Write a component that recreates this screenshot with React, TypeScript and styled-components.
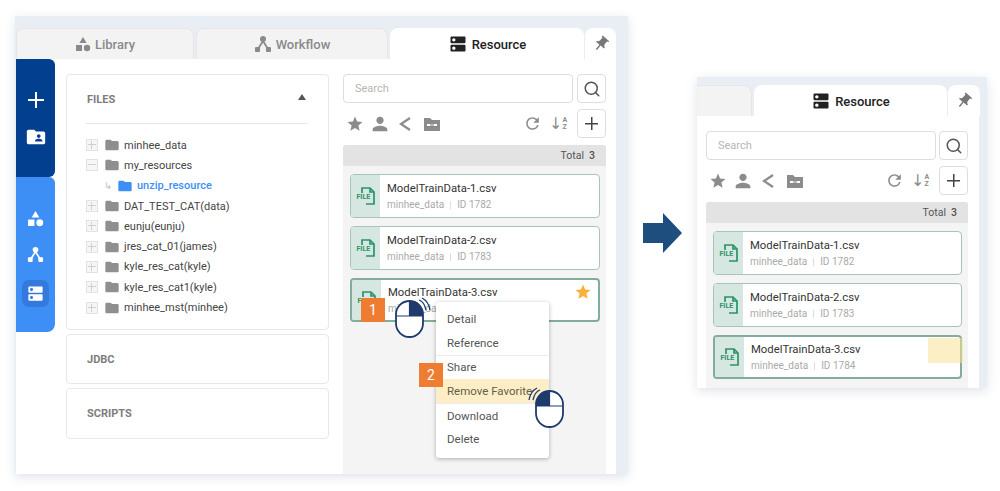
import styled, { createGlobalStyle } from 'styled-components';
import { MdDns, MdFolder, MdFolderShared, MdPerson, MdPushPin, MdRefresh, MdStar } from 'react-icons/md';
import { Search } from 'lucide-react';

const GlobalStyle = createGlobalStyle`
  html, body { margin: 0; padding: 0; background: #fff; }
  body { font-family: Roboto, "Liberation Sans", sans-serif; overflow: hidden; }
`;

const folders = [
  { name: 'minhee_data' },
  { name: 'my_resources', open: true },
  { name: 'unzip_resource', child: true },
  { name: 'DAT_TEST_CAT(data)' },
  { name: 'eunju(eunju)' },
  { name: 'jres_cat_01(james)' },
  { name: 'kyle_res_cat(kyle)' },
  { name: 'kyle_res_cat1(kyle)' },
  { name: 'minhee_mst(minhee)' },
];

function ShapesIcon({ size = 16 }: { size?: number }) {
  return (
    <svg width={size} height={size} viewBox="0 0 16 16" fill="currentColor">
      <path d="M8 1l3.600 6H4.400z" />
      <rect x="1" y="9" width="6" height="6" />
      <circle cx="12" cy="12" r="3.200" />
    </svg>
  );
}

function TreeIcon({ size = 18 }: { size?: number }) {
  return (
    <svg width={size} height={size} viewBox="0 0 18 18" fill="currentColor">
      <circle cx="9" cy="4" r="3" />
      <rect x="1" y="12" width="5" height="5" rx="1" />
      <rect x="12" y="12" width="5" height="5" rx="1" />
      <path d="M9 6L4 14M9 6l5 8" stroke="currentColor" strokeWidth="1.800" fill="none" />
    </svg>
  );
}

function ShareIcon() {
  return (
    <ShareSvg width="14" height="16" viewBox="0 0 14 16" fill="none" stroke="#8c8c8c" strokeWidth="2.200">
      <path d="M12 2L3 8l9 6" />
    </ShareSvg>
  );
}

function DotFolderIcon() {
  return (
    <svg width="16" height="14" viewBox="0 0 16 14">
      <path d="M0 1h6l2 2h8v11H0z" fill="#8c8c8c" />
      <rect x="3" y="7" width="3" height="2" fill="#fff" />
      <rect x="10" y="7" width="3" height="2" fill="#fff" />
      <rect x="6" y="7.600" width="4" height="0.800" fill="#fff" />
    </svg>
  );
}

function FileBadgeIcon() {
  return (
    <FileIconWrap>
      <svg width="16" height="18" viewBox="0 0 16 18" fill="none" stroke="#2b9368" strokeWidth="1.700">
        <path d="M2 6V1h8l4 4v12H6" />
        <path d="M10 1v4h4" />
      </svg>
      <FileLabel>FILE</FileLabel>
    </FileIconWrap>
  );
}

function MouseIcon({ left, top, flip }: { left: number; top: number; flip?: boolean }) {
  return (
    <MouseWrap $left={left} $top={top} $flip={flip}>
      <svg width="40" height="42" viewBox="0 0 40 42" fill="none">
        <rect x="1" y="5" width="27" height="36" rx="13.500" fill="#fff" stroke="#1f3b6d" strokeWidth="1.800" />
        <path d="M14.500 5h0A13.500 13.500 0 0 1 28 18.500V20H14.500z" fill="#1f3b6d" />
        <path d="M1 20h27M14.500 5v15" stroke="#1f3b6d" strokeWidth="1.200" />
        <path d="M24 4c3 1 6 5 7 10M27 2c4 2 7 6 8 12" stroke="#1f3b6d" strokeWidth="1.300" />
      </svg>
    </MouseWrap>
  );
}

function ResourcePanel({ active, showMenu }: { active?: boolean; showMenu?: boolean }) {
  const files = [
    { name: 'ModelTrainData-1.csv', id: 1782 },
    { name: 'ModelTrainData-2.csv', id: 1783 },
    { name: 'ModelTrainData-3.csv', id: 1784, last: true },
  ];

  return (
    <Panel>
      <SearchRow>
        <SearchBox>Search</SearchBox>
        <SquareButton><Search size={18} color="#555" strokeWidth={2} /></SquareButton>
      </SearchRow>
      <ToolRow>
        <ToolIcons>
          <MdStar size={18} color="#8c8c8c" />
          <MdPerson size={22} color="#8c8c8c" />
          <ShareIcon />
          <DotFolderIcon />
        </ToolIcons>
        <ToolRight>
          <MdRefresh size={19} color="#8c8c8c" />
          <SortIcon>
            <SortArrow>↓</SortArrow>
            <SortLetters><span>A</span><span>Z</span></SortLetters>
          </SortIcon>
          <SquareButton><PlusGlyph $color="#444" $size={13} $weight={1.5} /></SquareButton>
        </ToolRight>
      </ToolRow>
      <ListArea>
        <TotalBar>Total<b>3</b></TotalBar>
        <CardList>
          {files.map((f) => (
            <Card key={f.id} $strong={f.last}>
              <CardStrip><FileBadgeIcon /></CardStrip>
              <CardText $strong={f.last}>
                <CardTitle>{f.name}</CardTitle>
                <CardMeta>minhee_data<i />ID {f.id}</CardMeta>
              </CardText>
              {f.last && showMenu && <CardStar><MdStar size={18} color="#fbb03b" /></CardStar>}
              {f.last && active && <Highlight />}
            </Card>
          ))}
        </CardList>
        {showMenu && (
          <>
            <ContextMenu>
              <MenuItem>Detail</MenuItem>
              <MenuItem>Reference</MenuItem>
              <MenuRule />
              <MenuItem>Share</MenuItem>
              <MenuItem $on>Remove Favorite</MenuItem>
              <MenuRule />
              <MenuItem>Download</MenuItem>
              <MenuItem>Delete</MenuItem>
            </ContextMenu>
            <StepBadge $left={18} $top={153}>1</StepBadge>
            <StepBadge $left={76} $top={218}>2</StepBadge>
            <MouseIcon left={52} top={151} />
            <MouseIcon left={181} top={241} flip />
          </>
        )}
      </ListArea>
    </Panel>
  );
}

export default function App() {
  return (
    <>
      <GlobalStyle />
      <Page>
        <MainWindow>
          <TabBar>
            <Tab $width={178}><ShapesIcon />Library</Tab>
            <Tab $width={192}><TreeIcon />Workflow</Tab>
            <Tab $width={194} $active><MdDns size={20} />Resource</Tab>
            <PinTab $width={31}><MdPushPin size={18} /></PinTab>
          </TabBar>
          <MainBody>
            <Sidebar>
              <SideTop>
                <PlusGlyph $color="#fff" $size={16} $weight={2} />
                <MdFolderShared size={22} color="#fff" />
              </SideTop>
              <SideBottom>
                <ShapesIcon size={17} />
                <TreeIcon size={17} />
                <SideSelected><MdDns size={19} color="#fff" /></SideSelected>
              </SideBottom>
            </Sidebar>
            <FilesColumn>
              <FilesBox>
                <FilesHead>
                  <BoxTitle>FILES</BoxTitle>
                  <Caret />
                </FilesHead>
                <TreeList>
                  {folders.map((f) => (
                    <TreeRow key={f.name}>
                      {f.child ? (
                        <ChildHook>↳</ChildHook>
                      ) : (
                        <Toggle $open={f.open} />
                      )}
                      <MdFolder size={16} color={f.child ? '#3d8ff5' : '#8f8f8f'} />
                      <TreeName $child={f.child}>{f.name}</TreeName>
                    </TreeRow>
                  ))}
                </TreeList>
              </FilesBox>
              <CollapsedBox $height={50}><BoxTitle>JDBC</BoxTitle></CollapsedBox>
              <CollapsedBox $height={51}><BoxTitle>SCRIPTS</BoxTitle></CollapsedBox>
            </FilesColumn>
            <ResourcePanel showMenu />
          </MainBody>
        </MainWindow>
        <ArrowWrap>
          <svg width="39" height="40" viewBox="0 0 39 40">
            <path d="M0 10h20V0l19 20-19 20V30H0z" fill="#1d4e7e" />
          </svg>
        </ArrowWrap>
        <SideWindow>
          <TabBar>
            <Tab $width={55} $flush />
            <Tab $width={193} $active><MdDns size={20} />Resource</Tab>
            <PinTab $width={32}><MdPushPin size={18} /></PinTab>
          </TabBar>
          <SideBody>
            <ResourcePanel active />
          </SideBody>
        </SideWindow>
      </Page>
    </>
  );
}

const Page = styled.div`
  display: flex;
  align-items: flex-start;
  width: 1000px;
  height: 491px;
  padding: 16px 0 0 15px;
  box-sizing: border-box;
`;

const MainWindow = styled.div`
  flex: none;
  width: 613px;
  height: 458px;
  padding: 12px 12px 0 1px;
  box-sizing: border-box;
  display: flex;
  flex-direction: column;
  background: #e9edf4;
  box-shadow: 0 3px 10px rgba(60, 80, 120, 0.16);
`;

const SideWindow = styled(MainWindow)`
  width: 290px;
  height: 311px;
  margin: 61px 0 0 15px;
  padding: 8px 8px 0 0;
`;

const TabBar = styled.div`
  flex: none;
  display: flex;
  gap: 2px;
  height: 31px;
`;

const Tab = styled.div<{ $width: number; $active?: boolean; $flush?: boolean }>`
  flex: none;
  width: ${(p) => p.$width}px;
  display: flex;
  align-items: center;
  justify-content: center;
  gap: 4px;
  box-sizing: border-box;
  border: 1px solid ${(p) => (p.$active ? '#fff' : '#e6e6e6')};
  border-bottom: 0;
  border-left-width: ${(p) => (p.$flush ? 0 : '1px')};
  border-radius: ${(p) => (p.$flush ? '0 8px 0 0' : '8px 8px 0 0')};
  background: ${(p) => (p.$active ? '#fff' : '#f3f3f3')};
  color: ${(p) => (p.$active ? '#222' : '#8a8a8a')};
  font-size: 13px;
  font-weight: 500;
`;

const PinTab = styled(Tab)`
  margin-left: -1px;
  background: #fff;
  border-color: #fff;
  color: #777;
  svg { transform: rotate(40deg); }
`;

const MainBody = styled.div`
  flex: 1;
  min-height: 0;
  display: flex;
  align-items: stretch;
  padding-right: 10px;
  background: #fff;
`;

const SideBody = styled(MainBody)`
  padding: 0 11px 0 9px;
`;

const Sidebar = styled.div`
  flex: none;
  width: 39px;
  height: 273px;
  display: flex;
  flex-direction: column;
`;

const SideTop = styled.div`
  height: 118px;
  box-sizing: border-box;
  padding-top: 33px;
  display: flex;
  flex-direction: column;
  align-items: center;
  gap: 18px;
  background: #033f8f;
  border-radius: 0 6px 6px 0;
`;

const SideBottom = styled.div`
  flex: 1;
  box-sizing: border-box;
  padding-top: 33px;
  display: flex;
  flex-direction: column;
  align-items: center;
  gap: 19px;
  color: #fff;
  background: #3d8ff5;
  border-radius: 0 6px 8px 0;
`;

const SideSelected = styled.div`
  width: 27px;
  height: 27px;
  margin-top: -2px;
  display: flex;
  align-items: center;
  justify-content: center;
  background: #3479dd;
  border-radius: 7px;
`;

const FilesColumn = styled.div`
  flex: none;
  width: 263px;
  margin: 15px 14px 0 11px;
  display: flex;
  flex-direction: column;
  gap: 4px;
`;

const BoxBase = styled.div`
  box-sizing: border-box;
  border: 1.500px solid #e8e8e8;
  border-radius: 4px;
  background: #fff;
`;

const FilesBox = styled(BoxBase)`
  height: 256px;
  padding: 0 20px 0 19px;
`;

const CollapsedBox = styled(BoxBase)<{ $height: number }>`
  height: ${(p) => p.$height}px;
  padding: 0 20px;
  display: flex;
  align-items: center;
`;

const FilesHead = styled.div`
  height: 48px;
  display: flex;
  align-items: center;
  justify-content: space-between;
  border-bottom: 1.500px solid #e6e6e6;
  padding: 0 0 0 1px;
`;

const BoxTitle = styled.div`
  font-size: 11px;
  font-weight: 700;
  color: #7d7d7d;
`;

const Caret = styled.div`
  width: 0;
  height: 0;
  margin: 0 2px 4px 0;
  border-left: 4px solid transparent;
  border-right: 4px solid transparent;
  border-bottom: 6px solid #555;
`;

const TreeList = styled.div`
  padding-top: 11px;
  display: flex;
  flex-direction: column;
`;

const TreeRow = styled.div`
  height: 20.300px;
  display: flex;
  align-items: center;
`;

const Toggle = styled.span<{ $open?: boolean }>`
  position: relative;
  flex: none;
  width: 12px;
  height: 12px;
  margin-right: 6px;
  box-sizing: border-box;
  border: 1px solid #e2e2e2;
  background: #f6f6f6;
  &::before {
    content: '';
    position: absolute;
    left: 1px;
    right: 1px;
    top: 4px;
    height: 1px;
    background: #cfcfcf;
  }
  &::after {
    content: '';
    display: ${(p) => (p.$open ? 'none' : 'block')};
    position: absolute;
    top: 1px;
    bottom: 1px;
    left: 4px;
    width: 1px;
    background: #cfcfcf;
  }
`;

const ChildHook = styled.span`
  width: 12px;
  margin: 0 1px 0 18px;
  font-size: 10px;
  color: #c4c4c4;
  font-family: "DejaVu Sans", sans-serif;
`;

const TreeName = styled.span<{ $child?: boolean }>`
  margin-left: 4px;
  font-size: 11px;
  font-weight: ${(p) => (p.$child ? 500 : 400)};
  color: ${(p) => (p.$child ? '#3d8ff5' : '#444')};
`;

const Panel = styled.div`
  flex: 1;
  min-width: 0;
  padding-top: 15px;
  display: flex;
  flex-direction: column;
`;

const SearchRow = styled.div`
  display: flex;
  justify-content: space-between;
`;

const SearchBox = styled.div`
  width: 230px;
  height: 29px;
  box-sizing: border-box;
  padding-left: 11px;
  display: flex;
  align-items: center;
  border: 1px solid #dedede;
  border-radius: 4px;
  font-size: 11px;
  color: #b5b5b5;
`;

const SquareButton = styled.div`
  flex: none;
  width: 29px;
  height: 29px;
  box-sizing: border-box;
  display: flex;
  align-items: center;
  justify-content: center;
  border: 1px solid #dedede;
  border-radius: 4px;
`;

const ToolRow = styled.div`
  height: 29px;
  margin-top: 6px;
  display: flex;
  align-items: center;
  justify-content: space-between;
`;

const ToolIcons = styled.div`
  display: flex;
  align-items: center;
  gap: 5px;
  padding-left: 3px;
`;

const ShareSvg = styled.svg`
  margin: 0 7px 0 2px;
`;

const ToolRight = styled.div`
  display: flex;
  align-items: center;
  gap: 10px;
`;

const PlusGlyph = styled.span<{ $color: string; $size: number; $weight: number }>`
  display: block;
  width: ${(p) => p.$size}px;
  height: ${(p) => p.$size}px;
  background:
    linear-gradient(${(p) => p.$color}, ${(p) => p.$color}) center / 100% ${(p) => p.$weight}px no-repeat,
    linear-gradient(${(p) => p.$color}, ${(p) => p.$color}) center / ${(p) => p.$weight}px 100% no-repeat;
`;

const SortIcon = styled.div`
  width: 15px;
  display: flex;
  align-items: center;
  color: #8c8c8c;
`;

const SortArrow = styled.span`
  font-size: 16px;
  line-height: 16px;
  font-family: "DejaVu Sans", sans-serif;
  margin-left: -3px;
`;

const SortLetters = styled.span`
  display: flex;
  flex-direction: column;
  font-size: 7px;
  line-height: 7px;
  font-weight: 700;
`;

const ListArea = styled.div`
  position: relative;
  flex: 1;
  min-height: 0;
  margin-top: 7px;
  background: #f4f4f4;
  border-radius: 3px 3px 0 0;
`;

const TotalBar = styled.div`
  height: 21px;
  box-sizing: border-box;
  padding-right: 11px;
  display: flex;
  align-items: center;
  justify-content: flex-end;
  background: #e3e3e3;
  border-radius: 3px 3px 0 0;
  font-size: 10.500px;
  color: #555;
  b {
    margin-left: 5px;
    font-weight: 500;
  }
`;

const CardList = styled.div`
  padding: 8px 6px 0 7px;
  display: flex;
  flex-direction: column;
  gap: 8px;
`;

const Card = styled.div<{ $strong?: boolean }>`
  position: relative;
  height: 44px;
  box-sizing: border-box;
  display: flex;
  background: #fff;
  border: ${(p) => (p.$strong ? '2px solid #82ad9b' : '1.500px solid #a5c5b8')};
  border-radius: 4px;
`;

const CardStrip = styled.div`
  flex: none;
  width: 29px;
  display: flex;
  align-items: center;
  justify-content: center;
  background: #d6e6e0;
  border-radius: 2px 0 0 2px;
`;

const FileIconWrap = styled.div`
  position: relative;
  width: 18px;
  height: 18px;
  svg { position: absolute; left: 3px; top: 0; }
`;

const FileLabel = styled.span`
  position: absolute;
  left: -1px;
  top: 6px;
  padding: 0 1px;
  background: #d6e6e0;
  font-size: 7px;
  line-height: 8px;
  font-weight: 700;
  color: #2b9368;
`;

const CardText = styled.div<{ $strong?: boolean }>`
  padding: ${(p) => (p.$strong ? '5px' : '6px')} 0 0 7px;
`;

const CardTitle = styled.div`
  font-size: 11.300px;
  line-height: 16px;
  color: #333;
`;

const CardMeta = styled.div`
  display: flex;
  align-items: center;
  font-size: 10px;
  line-height: 15px;
  color: #aaa;
  i {
    width: 1px;
    height: 8px;
    margin: 0 6px;
    background: #ddd;
  }
`;

const CardStar = styled.span`
  position: absolute;
  right: 6px;
  top: 3px;
  display: flex;
`;

const Highlight = styled.div`
  position: absolute;
  right: -3px;
  top: 1px;
  width: 35px;
  height: 25px;
  background: rgba(251, 226, 150, 0.55);
`;

const ContextMenu = styled.div`
  position: absolute;
  left: 93px;
  top: 157px;
  width: 113px;
  height: 156px;
  box-sizing: border-box;
  padding-top: 5.500px;
  background: #fff;
  border-radius: 3px;
  box-shadow: 0 1px 4px rgba(0, 0, 0, 0.3);
`;

const MenuItem = styled.div<{ $on?: boolean }>`
  height: ${(p) => (p.$on ? '24px' : '23.500px')};
  padding-left: 11px;
  display: flex;
  align-items: center;
  font-size: 11.500px;
  color: ${(p) => (p.$on ? '#665e45' : '#555')};
  background: ${(p) => (p.$on ? '#fdeec8' : 'transparent')};
`;

const MenuRule = styled.div`
  height: 1px;
  background: #ececec;
`;

const StepBadge = styled.div<{ $left: number; $top: number }>`
  position: absolute;
  left: ${(p) => p.$left}px;
  top: ${(p) => p.$top}px;
  width: 24px;
  height: 24px;
  display: flex;
  align-items: center;
  justify-content: center;
  background: #ef7d31;
  color: #fff;
  font-size: 14px;
`;

const MouseWrap = styled.div<{ $left: number; $top: number; $flip?: boolean }>`
  position: absolute;
  left: ${(p) => p.$left}px;
  top: ${(p) => p.$top}px;
  display: flex;
  transform: ${(p) => (p.$flip ? 'scaleX(-1)' : 'none')};
`;

const ArrowWrap = styled.div`
  flex: none;
  margin: 197px 0 0 15px;
  display: flex;
`;
